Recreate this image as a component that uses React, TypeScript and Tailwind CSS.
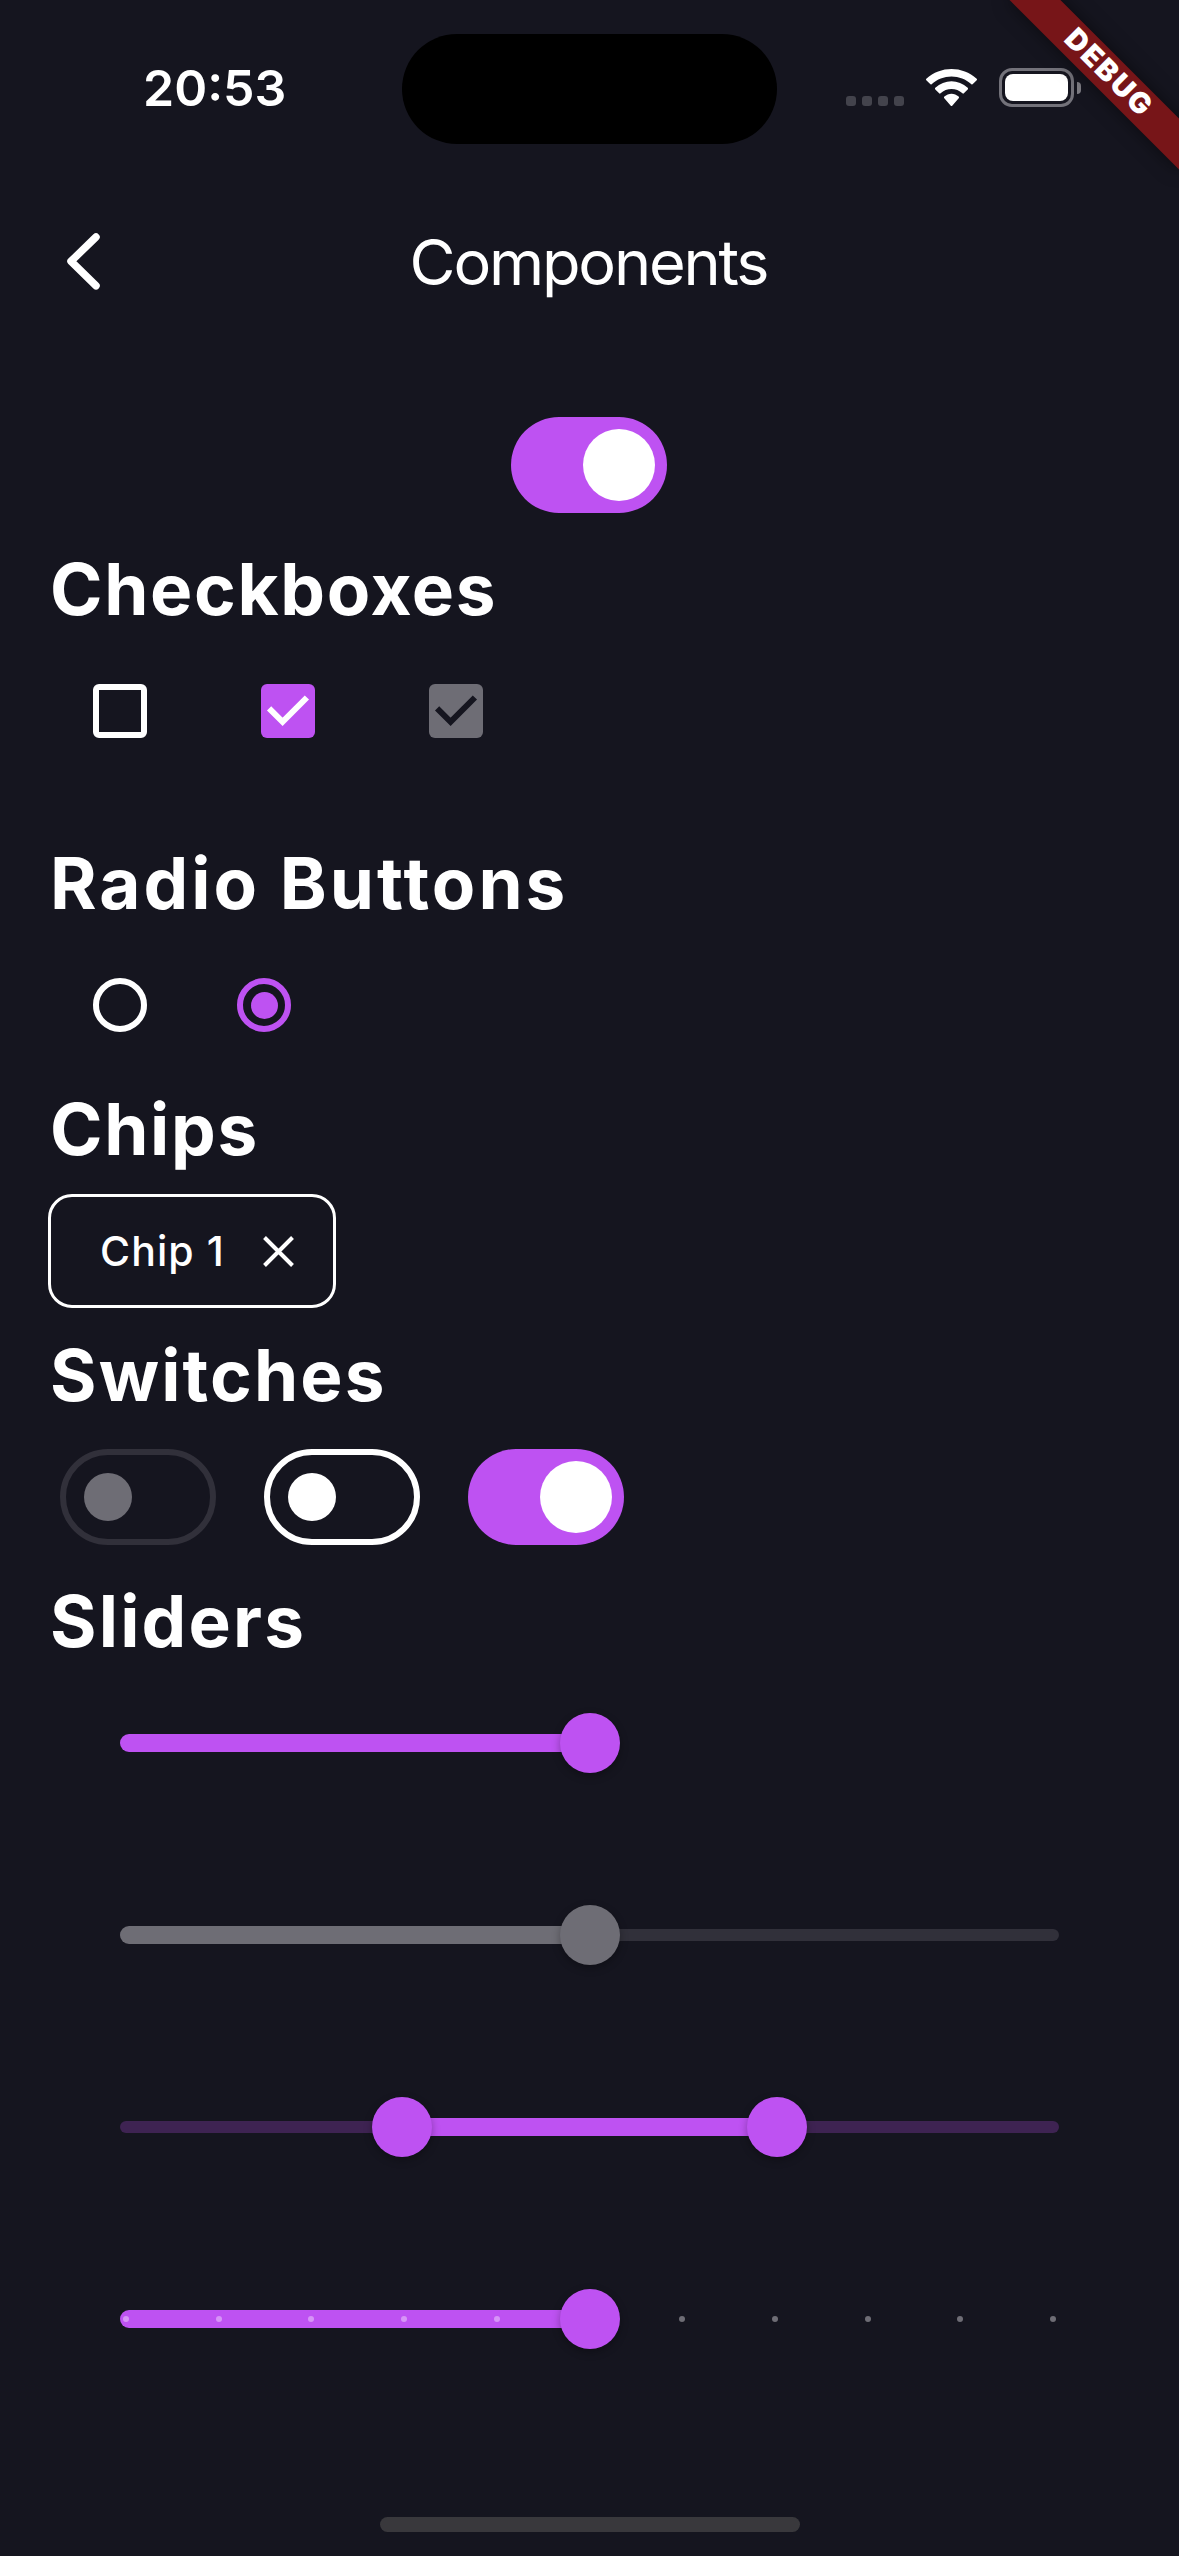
import type { ReactNode } from 'react';

const WIFI_PATH =
  'M8.5713 2.46628C11.0584 2.46639 13.4504 3.38847 15.2529 5.04195C15.3887 5.16963 15.6056 5.16802 15.7393 5.03834L17.0368 3.77487C17.1045 3.70911 17.1422 3.62004 17.1417 3.52735C17.1411 3.43467 17.1023 3.34603 17.0338 3.28104C12.3028 -1.09368 4.83907 -1.09368 0.108056 3.28104C0.039524 3.34598 0.000639766 3.4346 0 3.52728C-0.000624118 3.61996 0.0370483 3.70906 0.104689 3.77487L1.40255 5.03834C1.53615 5.16822 1.75327 5.16983 1.88893 5.04195C3.69167 3.38836 6.08395 2.46628 8.5713 2.46628ZM8.56795 6.68656C9.92527 6.68647 11.2341 7.19821 12.2403 8.12234C12.3763 8.25347 12.5907 8.25063 12.7234 8.11594L14.0106 6.79679C14.0784 6.7276 14.116 6.63373 14.115 6.5362C14.114 6.43866 14.0746 6.34561 14.0054 6.27781C10.9416 3.38819 6.19688 3.38819 3.13305 6.27781C3.06384 6.34561 3.02435 6.43871 3.02345 6.53628C3.02254 6.63384 3.06028 6.72768 3.12822 6.79679L4.41513 8.11594C4.54778 8.25063 4.76215 8.25347 4.89823 8.12234C5.90368 7.19882 7.21152 6.68713 8.56795 6.68656ZM11.0924 9.48011C11.0943 9.58546 11.0572 9.68703 10.9899 9.76084L8.81327 12.2156C8.74946 12.2877 8.66247 12.3283 8.5717 12.3283C8.48093 12.3283 8.39394 12.2877 8.33013 12.2156L6.15315 9.76084C6.08585 9.68697 6.04884 9.58537 6.05085 9.48002C6.05285 9.37467 6.09367 9.27491 6.16381 9.20429C7.55441 7.89186 9.58899 7.89186 10.9796 9.20429C11.0497 9.27497 11.0904 9.37476 11.0924 9.48011Z';

function StatusBar() {
  return (
    <div className="flex h-[177px] items-start pt-[34px]">
      <div className="w-[402px] pl-[143px] text-[50px] font-semibold leading-[108px]">20:53</div>
      <div className="h-[110px] w-[375px] rounded-full bg-black" />
      <div className="flex h-[107px] items-center pl-[69px]">
        <div className="mt-[27px] flex gap-[6px]">
          {[0, 1, 2, 3].map((i) => (
            <span key={i} className="size-[10px] rounded-[3px] bg-[#43434c]" />
          ))}
        </div>
        <svg className="ml-[22px] h-[37px] w-[51px]" viewBox="0 0 17.14 12.33" preserveAspectRatio="none" fill="white">
          <path d={WIFI_PATH} />
        </svg>
        <div className="ml-[22px] h-[39px] w-[75px] rounded-[13px] border-[3px] border-[#73727a] p-[3px]">
          <div className="h-full rounded-[8px] bg-white" />
        </div>
        <div className="ml-[3px] h-[12px] w-[4px] rounded-r-full bg-[#7e7d84]" />
      </div>
    </div>
  );
}

function AppBar() {
  return (
    <header className="flex h-[168px] items-center">
      <button className="flex h-full w-[168px] items-center pl-[66px]" aria-label="Back">
        <svg className="h-[57px] w-[34px]" viewBox="0 0 34 57" fill="none" stroke="white" strokeWidth="7.5" strokeLinecap="round" strokeLinejoin="round">
          <path d="M30 4 L5 28.3 L30 52.8" />
        </svg>
      </button>
      <h1 className="flex-1 pr-[2px] pt-[2px] text-center text-[63px] font-normal leading-[168px] tracking-[-2.2px]">Components</h1>
      <div className="w-[168px]" />
    </header>
  );
}

function Heading({ spacing, children }: { spacing: string; children: ReactNode }) {
  return <h2 className={`h-[102px] pl-[2px] text-[71px] font-bold leading-[104px] ${spacing}`}>{children}</h2>;
}

function SwitchOn() {
  return (
    <div className="flex h-[96px] w-[156px] items-center justify-end rounded-full bg-[#be52f2] pr-[12px]">
      <div className="size-[72px] rounded-full bg-white" />
    </div>
  );
}

function SwitchOff({ disabled }: { disabled?: boolean }) {
  return (
    <div
      className={`flex h-[96px] w-[156px] items-center rounded-full border-[6px] pl-[18px] ${
        disabled ? 'border-[#31303a]' : 'border-white'
      }`}
    >
      <div className={`size-[48px] rounded-full ${disabled ? 'bg-[#6e6d75]' : 'bg-white'}`} />
    </div>
  );
}

function Cell({ children }: { children: ReactNode }) {
  return <div className="flex size-[144px] items-center justify-center">{children}</div>;
}

function Checked({ box, mark }: { box: string; mark: string }) {
  return (
    <div className={`size-[54px] rounded-[6px] ${box}`}>
      <svg className="size-[54px]" viewBox="0 0 54 54" fill="none" stroke={mark} strokeWidth="6">
        <path d="M8.1 24.3 L21.6 37.8 L45.9 13.5" />
      </svg>
    </div>
  );
}

type SliderProps = {
  from?: number;
  to: number;
  active: string;
  inactive?: string;
  range?: boolean;
  ticks?: boolean;
};

function Thumb({ at, color }: { at: number; color: string }) {
  return (
    <div
      className={`absolute top-1/2 size-[60px] -translate-x-1/2 -translate-y-1/2 rounded-full shadow-[0_3px_8px_rgba(0,0,0,0.3)] ${color}`}
      style={{ left: `${at}%` }}
    />
  );
}

function Slider({ from = 0, to, active, inactive = '', range, ticks }: SliderProps) {
  return (
    <div className="px-[72px]">
      <div className="relative flex h-[144px] items-center">
        <div className={`h-[12px] w-full rounded-full ${inactive}`} />
        <div
          className={`absolute top-[63px] h-[18px] ${range ? '' : 'rounded-l-full'} ${active}`}
          style={{ left: `${from}%`, width: `${to - from}%` }}
        />
        {ticks && (
          <div className="absolute inset-x-[3px] top-[69px] flex justify-between">
            {Array.from({ length: 11 }, (_, i) => (
              <span key={i} className={`size-[6px] rounded-full ${i <= 5 ? 'bg-[#d794f7]' : 'bg-[#6e6d75]'}`} />
            ))}
          </div>
        )}
        {range && <Thumb at={from} color={active} />}
        <Thumb at={to} color={active} />
      </div>
    </div>
  );
}

function DebugBanner() {
  return (
    <div className="pointer-events-none absolute right-0 top-0 size-[240px] overflow-hidden">
      <div className="absolute right-[-48px] top-[54px] h-[36px] w-[240px] rotate-45 bg-[#771518] pl-[4px] text-center text-[29px] font-black leading-[34px] tracking-[2px] shadow-[0_0_18px_rgba(0,0,0,0.5)]">
        DEBUG
      </div>
    </div>
  );
}

export default function App() {
  return (
    <div className="relative flex h-[2556px] w-[1179px] flex-col overflow-hidden bg-[#15151f] font-['Inter',sans-serif] text-white">
      <StatusBar />
      <AppBar />
      <main className="flex flex-1 flex-col px-[48px] pt-[48px]">
        <div className="flex h-[144px] items-center justify-center pr-px">
          <SwitchOn />
        </div>

        <Heading spacing="tracking-[1.65px]">Checkboxes</Heading>
        <div className="mb-[48px] flex gap-6">
          <Cell>
            <div className="size-[54px] rounded-[6px] border-[6px] border-white" />
          </Cell>
          <Cell>
            <Checked box="bg-[#be52f2]" mark="#ffffff" />
          </Cell>
          <Cell>
            <Checked box="bg-[#6e6d75]" mark="#15151f" />
          </Cell>
        </div>

        <Heading spacing="tracking-[3px]">Radio Buttons</Heading>
        <div className="flex">
          <Cell>
            <div className="size-[54px] rounded-full border-[6px] border-white" />
          </Cell>
          <Cell>
            <div className="flex size-[54px] items-center justify-center rounded-full border-[6px] border-[#be52f2]">
              <div className="size-[27px] rounded-full bg-[#be52f2]" />
            </div>
          </Cell>
        </div>

        <Heading spacing="tracking-[1.7px]">Chips</Heading>
        <div className="flex h-[144px] items-center">
          <div className="flex h-[114px] w-[288px] items-center rounded-[24px] border-[3px] border-white pl-[49px]">
            <span className="w-[163px] text-[41px] font-[450] leading-[108px] tracking-[1.1px]">Chip 1</span>
            <svg className="size-[31px]" viewBox="0 0 31 31" fill="none" stroke="white" strokeWidth="4">
              <path d="M1.5 1.5 L29.5 29.5 M29.5 1.5 L1.5 29.5" />
            </svg>
          </div>
        </div>

        <Heading spacing="tracking-[2.15px]">Switches</Heading>
        <div className="flex h-[144px] items-center gap-[48px] pl-[12px]">
          <SwitchOff disabled />
          <SwitchOff />
          <SwitchOn />
        </div>

        <Heading spacing="tracking-[2.2px]">Sliders</Heading>
        <div className="flex flex-col gap-[48px]">
          <Slider to={50} active="bg-[#be52f2]" />
          <Slider to={50} active="bg-[#6e6d75]" inactive="bg-[#31303a]" />
          <Slider from={30} to={70} active="bg-[#be52f2]" inactive="bg-[#3e2352]" range />
          <Slider to={50} active="bg-[#be52f2]" ticks />
        </div>
      </main>
      <div className="mb-[24px] h-[15px] w-[420px] self-center rounded-full bg-[#39383c]" />
      <DebugBanner />
    </div>
  );
}
